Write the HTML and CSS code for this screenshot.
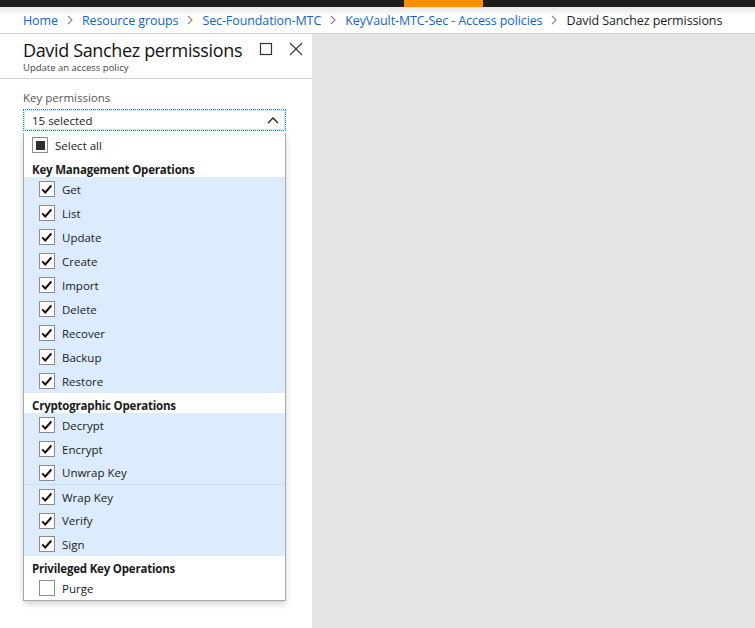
FILE: index.html
```html
<!DOCTYPE html>
<html>
<head>
<meta charset="utf-8">
<link rel="stylesheet" href="styles.css">
</head>
<body>
<div class="topbar"><div class="topbar-accent"></div></div>
<nav class="crumbs">
  <a class="crumb">Home</a>
  <svg class="sep" viewBox="0 0 8 10" width="8" height="10"><path d="M2 1 L6 5 L2 9" fill="none" stroke="#8a8a8a" stroke-width="1.2"/></svg>
  <a class="crumb">Resource groups</a>
  <svg class="sep" viewBox="0 0 8 10" width="8" height="10"><path d="M2 1 L6 5 L2 9" fill="none" stroke="#8a8a8a" stroke-width="1.2"/></svg>
  <a class="crumb">Sec-Foundation-MTC</a>
  <svg class="sep" viewBox="0 0 8 10" width="8" height="10"><path d="M2 1 L6 5 L2 9" fill="none" stroke="#8a8a8a" stroke-width="1.2"/></svg>
  <a class="crumb">KeyVault-MTC-Sec - Access policies</a>
  <svg class="sep" viewBox="0 0 8 10" width="8" height="10"><path d="M2 1 L6 5 L2 9" fill="none" stroke="#8a8a8a" stroke-width="1.2"/></svg>
  <span class="crumb current">David Sanchez permissions</span>
</nav>
<div class="main">
  <section class="blade">
    <header class="blade-head">
      <div class="titles">
        <h1 class="title">David Sanchez permissions</h1>
        <div class="subtitle">Update an access policy</div>
      </div>
      <div class="head-icons">
        <svg class="hicon" viewBox="0 0 14 14" width="14" height="14"><rect x="1.5" y="1.5" width="11" height="11" fill="none" stroke="#333" stroke-width="1.2"/></svg>
        <svg class="hicon" viewBox="0 0 14 14" width="14" height="14"><path d="M1 1 L13 13 M13 1 L1 13" fill="none" stroke="#333" stroke-width="1.1"/></svg>
      </div>
    </header>
    <div class="blade-body">
      <div class="label">Key permissions</div>
      <div class="dropdown">
        <span>15 selected</span>
        <svg viewBox="0 0 12 8" width="12" height="8"><path d="M1 7 L6 2 L11 7" fill="none" stroke="#222" stroke-width="1.4"/></svg>
      </div>
      <div class="list">
        <div class="row selall"><span class="cb partial"><span class="cb-fill"></span></span><span>Select all</span></div>
        <div class="group">Key Management Operations</div>
        <div class="items">
          <div class="row item"><span class="cb"><svg viewBox="0 0 16 16" width="14" height="14"><path d="M2.5 8.5 L6 12 L13 4" fill="none" stroke="#111" stroke-width="2.2"/></svg></span><span>Get</span></div>
          <div class="row item"><span class="cb"><svg viewBox="0 0 16 16" width="14" height="14"><path d="M2.5 8.5 L6 12 L13 4" fill="none" stroke="#111" stroke-width="2.2"/></svg></span><span>List</span></div>
          <div class="row item"><span class="cb"><svg viewBox="0 0 16 16" width="14" height="14"><path d="M2.5 8.5 L6 12 L13 4" fill="none" stroke="#111" stroke-width="2.2"/></svg></span><span>Update</span></div>
          <div class="row item"><span class="cb"><svg viewBox="0 0 16 16" width="14" height="14"><path d="M2.5 8.5 L6 12 L13 4" fill="none" stroke="#111" stroke-width="2.2"/></svg></span><span>Create</span></div>
          <div class="row item"><span class="cb"><svg viewBox="0 0 16 16" width="14" height="14"><path d="M2.5 8.5 L6 12 L13 4" fill="none" stroke="#111" stroke-width="2.2"/></svg></span><span>Import</span></div>
          <div class="row item"><span class="cb"><svg viewBox="0 0 16 16" width="14" height="14"><path d="M2.5 8.5 L6 12 L13 4" fill="none" stroke="#111" stroke-width="2.2"/></svg></span><span>Delete</span></div>
          <div class="row item"><span class="cb"><svg viewBox="0 0 16 16" width="14" height="14"><path d="M2.5 8.5 L6 12 L13 4" fill="none" stroke="#111" stroke-width="2.2"/></svg></span><span>Recover</span></div>
          <div class="row item"><span class="cb"><svg viewBox="0 0 16 16" width="14" height="14"><path d="M2.5 8.5 L6 12 L13 4" fill="none" stroke="#111" stroke-width="2.2"/></svg></span><span>Backup</span></div>
          <div class="row item"><span class="cb"><svg viewBox="0 0 16 16" width="14" height="14"><path d="M2.5 8.5 L6 12 L13 4" fill="none" stroke="#111" stroke-width="2.2"/></svg></span><span>Restore</span></div>
        </div>
        <div class="group">Cryptographic Operations</div>
        <div class="items">
          <div class="row item"><span class="cb"><svg viewBox="0 0 16 16" width="14" height="14"><path d="M2.5 8.5 L6 12 L13 4" fill="none" stroke="#111" stroke-width="2.2"/></svg></span><span>Decrypt</span></div>
          <div class="row item"><span class="cb"><svg viewBox="0 0 16 16" width="14" height="14"><path d="M2.5 8.5 L6 12 L13 4" fill="none" stroke="#111" stroke-width="2.2"/></svg></span><span>Encrypt</span></div>
          <div class="row item divided"><span class="cb"><svg viewBox="0 0 16 16" width="14" height="14"><path d="M2.5 8.5 L6 12 L13 4" fill="none" stroke="#111" stroke-width="2.2"/></svg></span><span>Unwrap Key</span></div>
          <div class="row item"><span class="cb"><svg viewBox="0 0 16 16" width="14" height="14"><path d="M2.5 8.5 L6 12 L13 4" fill="none" stroke="#111" stroke-width="2.2"/></svg></span><span>Wrap Key</span></div>
          <div class="row item short"><span class="cb"><svg viewBox="0 0 16 16" width="14" height="14"><path d="M2.5 8.5 L6 12 L13 4" fill="none" stroke="#111" stroke-width="2.2"/></svg></span><span>Verify</span></div>
          <div class="row item"><span class="cb"><svg viewBox="0 0 16 16" width="14" height="14"><path d="M2.5 8.5 L6 12 L13 4" fill="none" stroke="#111" stroke-width="2.2"/></svg></span><span>Sign</span></div>
        </div>
        <div class="group">Privileged Key Operations</div>
        <div class="row item plain"><span class="cb"></span><span>Purge</span></div>
      </div>
    </div>
  </section>
  <div class="backdrop"></div>
</div>
</body>
</html>
```
FILE: styles.css
```css
html, body {
  margin: 0;
  padding: 0;
  height: 100%;
  overflow: hidden;
}
body {
  font-family: "Open Sans", "Noto Sans", "Liberation Sans", sans-serif;
  color: #1a1a1a;
  background: #e4e4e4;
  display: flex;
  flex-direction: column;
}
.topbar {
  height: 7px;
  background: #1e1e1e;
  display: flex;
  flex-shrink: 0;
}
.topbar-accent {
  margin-left: 404px;
  width: 79px;
  background: #ff8c00;
}
.crumbs {
  height: 26px;
  flex-shrink: 0;
  display: flex;
  align-items: center;
  padding-left: 23px;
  background: linear-gradient(#e6e6e6 0, #fff 9px);
  border-bottom: 1px solid #cfcfcf;
  font-size: 12.5px;
  gap: 8px;
  white-space: nowrap;
}
.crumb {
  color: #1065c9;
  letter-spacing: -0.1px;
}
.crumb.current {
  color: #1a1a1a;
}
.sep {
  flex-shrink: 0;
}
.main {
  flex: 1;
  display: flex;
}
.blade {
  width: 312px;
  background: #fff;
  flex-shrink: 0;
}
.backdrop {
  flex: 1;
  background: #e4e4e4;
}
.blade-head {
  height: 44px;
  border-bottom: 1px solid #d0d0d0;
  display: flex;
  justify-content: space-between;
  padding: 0 9px 0 23px;
}
.title {
  margin: 5px 0 0 0;
  font-size: 18px;
  font-weight: 400;
  line-height: 22px;
  letter-spacing: -0.35px;
  color: #111;
}
.subtitle {
  font-size: 9.5px;
  color: #444;
  line-height: 12px;
  margin-top: 1px;
}
.head-icons {
  display: flex;
  gap: 16px;
  padding-top: 8px;
}
.blade-body {
  padding: 12px 26px 0 23px;
}
.label {
  font-size: 11.5px;
  color: #555;
  line-height: 14px;
}
.dropdown {
  margin-top: 4px;
  height: 20px;
  border: 1px dotted #1a8ad4;
  outline: 1px solid #cde6f7;
  outline-offset: -2px;
  display: flex;
  align-items: center;
  justify-content: space-between;
  padding: 0 6px 0 8px;
  font-size: 11.5px;
}
.list {
  border: 1px solid #a8a8a8;
  border-top: none;
  box-shadow: 0 3px 6px rgba(0,0,0,0.18);
  font-size: 11.5px;
}
.row {
  display: flex;
  align-items: center;
  gap: 7px;
}
.selall {
  height: 24px;
  padding-left: 8px;
  margin-top: 2px;
}
.group {
  font-weight: 700;
  padding-left: 8px;
  height: 20px;
  line-height: 14px;
  display: flex;
  align-items: flex-end;
  letter-spacing: -0.2px;
}
.items {
  background: #dcecfc;
}
.item {
  height: 24px;
  padding-left: 15px;
}
.item.short {
  height: 23px;
}
.item.divided {
  border-bottom: 1px solid #c4def6;
  height: 23px;
}
.item.plain {
  height: 24px;
}
.cb {
  width: 14px;
  height: 14px;
  border: 1px solid #8c8c8c;
  background: #fff;
  display: flex;
  align-items: center;
  justify-content: center;
  flex-shrink: 0;
}
.cb-fill {
  width: 9px;
  height: 9px;
  background: #2f2f2f;
}
```
